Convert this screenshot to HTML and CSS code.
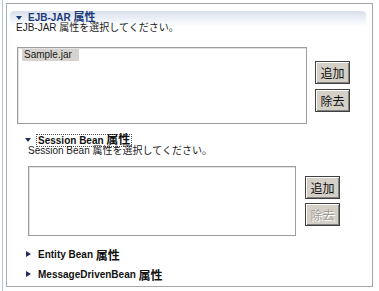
FILE: index.html
```html
<!DOCTYPE html>
<html>
<head>
  <meta charset="utf-8">
  <title>EJB-JAR 属性</title>
  <link rel="stylesheet" href="styles.css">
</head>
<body>
  <div class="frame">
    <div class="panel">
      <div class="sec-head">
        <div class="sec-title"><span class="tri-down"></span>EJB-JAR <span class="jp">属性</span></div>
        <div class="sec-desc">EJB-JAR 属性を選択してください。</div>
      </div>
      <div class="pick pick-main">
        <div class="list"><span class="item">Sample.jar</span></div>
        <div class="btns">
          <button class="btn">追加</button>
          <button class="btn">除去</button>
        </div>
      </div>
      <div class="sub">
        <div class="sub-title"><span class="tri-down dark"></span><span class="focus">Session Bean <span class="jp">属性</span></span></div>
        <div class="sub-desc">Session Bean 属性を選択してください。</div>
        <div class="pick pick-sub">
          <div class="list"></div>
          <div class="btns">
            <button class="btn">追加</button>
            <button class="btn" disabled>除去</button>
          </div>
        </div>
      </div>
      <div class="closed first"><span class="tri-right"></span>Entity Bean <span class="jp">属性</span></div>
      <div class="closed"><span class="tri-right"></span>MessageDrivenBean <span class="jp">属性</span></div>
    </div>
  </div>
</body>
</html>
```

FILE: styles.css
```css
body {
  margin: 0;
  background: #ffffff;
  font-family: "Liberation Sans", "Noto Sans CJK JP", sans-serif;
  font-size: 10px;
  color: #1a1a1a;
}

.frame {
  margin-left: 2px;
  border-left: 1px solid #b7c3da;
  padding: 3px 0 0 3px;
  height: 291px;
  box-sizing: border-box;
}

.panel {
  width: 367px;
  height: 284px;
  box-sizing: border-box;
  border: 1px solid #a6a6a6;
  border-left-color: #a3b2cc;
  display: flex;
  flex-direction: column;
}

.jp {
  font-size: 12px;
}

/* top section */
.sec-head {
  margin: 7px 6px 0 3px;
  border-radius: 4px 4px 0 0;
  border-top: 1px solid #d9e0ea;
  background: linear-gradient(#dbe2ed, #f4f7fb 10px, #ffffff 15px);
}

.sec-title {
  height: 11px;
  line-height: 11px;
  padding-left: 6px;
  display: flex;
  align-items: center;
  font-weight: bold;
  color: #1b3a78;
  white-space: pre;
}

.sec-title .jp {
  font-size: 11px;
}

.sec-desc {
  height: 10px;
  line-height: 10px;
  padding-left: 6px;
  white-space: pre;
}

.tri-down {
  width: 0;
  height: 0;
  border-left: 3px solid transparent;
  border-right: 3px solid transparent;
  border-top: 4px solid #1b3a78;
  margin-right: 6px;
}

.tri-down.dark {
  border-top-color: #1f2f5c;
}

.tri-right {
  width: 0;
  height: 0;
  border-top: 3px solid transparent;
  border-bottom: 3px solid transparent;
  border-left: 5px solid #1f2f5c;
  margin-right: 7px;
}

/* list + buttons */
.pick {
  display: flex;
  align-items: flex-start;
}

.pick-main {
  margin: 14px 0 0 10px;
}

.pick-main .list {
  width: 290px;
  height: 77px;
}

.pick-main .btns {
  margin: 14px 0 0 8px;
  gap: 5px;
}

.list {
  box-sizing: border-box;
  border: 1px solid #9d9d9d;
  box-shadow: inset 1px 1px 0 #e2e2e2;
  background: #ffffff;
  padding: 1px 0 0 4px;
}

.item {
  display: inline-block;
  background: #d6d3ce;
  line-height: 12px;
  padding: 0 7px 0 2px;
}

.btns {
  display: flex;
  flex-direction: column;
}

.btn {
  width: 35px;
  height: 23px;
  padding: 0;
  font-family: "Noto Sans CJK JP", sans-serif;
  font-size: 12px;
  line-height: 12px;
  color: #111111;
  background: #d4d0c8;
  border: 1px solid #404040;
  box-shadow: inset 1px 1px 0 #ffffff, inset -1px -1px 0 #808080;
}

.btn:disabled {
  color: #a09c96;
  text-shadow: 1px 1px 0 #ffffff;
}

/* session bean subsection */
.sub {
  margin: 10px 0 0 18px;
}

.sub-title {
  height: 12px;
  display: flex;
  align-items: center;
  font-weight: bold;
  color: #111111;
}

.focus {
  line-height: 10px;
  padding: 0 1px;
  outline: 1px dotted #555555;
  white-space: pre;
}

.sub-desc {
  height: 10px;
  line-height: 10px;
  padding-left: 3px;
  white-space: pre;
}

.pick-sub {
  margin: 10px 0 0 3px;
}

.pick-sub .list {
  width: 268px;
  height: 70px;
}

.pick-sub .btns {
  margin: 10px 0 0 9px;
  gap: 4px;
}

/* collapsed sections */
.closed {
  height: 12px;
  margin: 8px 0 0 19px;
  display: flex;
  align-items: center;
  font-weight: bold;
  color: #111111;
  white-space: pre;
}

.closed.first {
  margin-top: 12px;
}
```
